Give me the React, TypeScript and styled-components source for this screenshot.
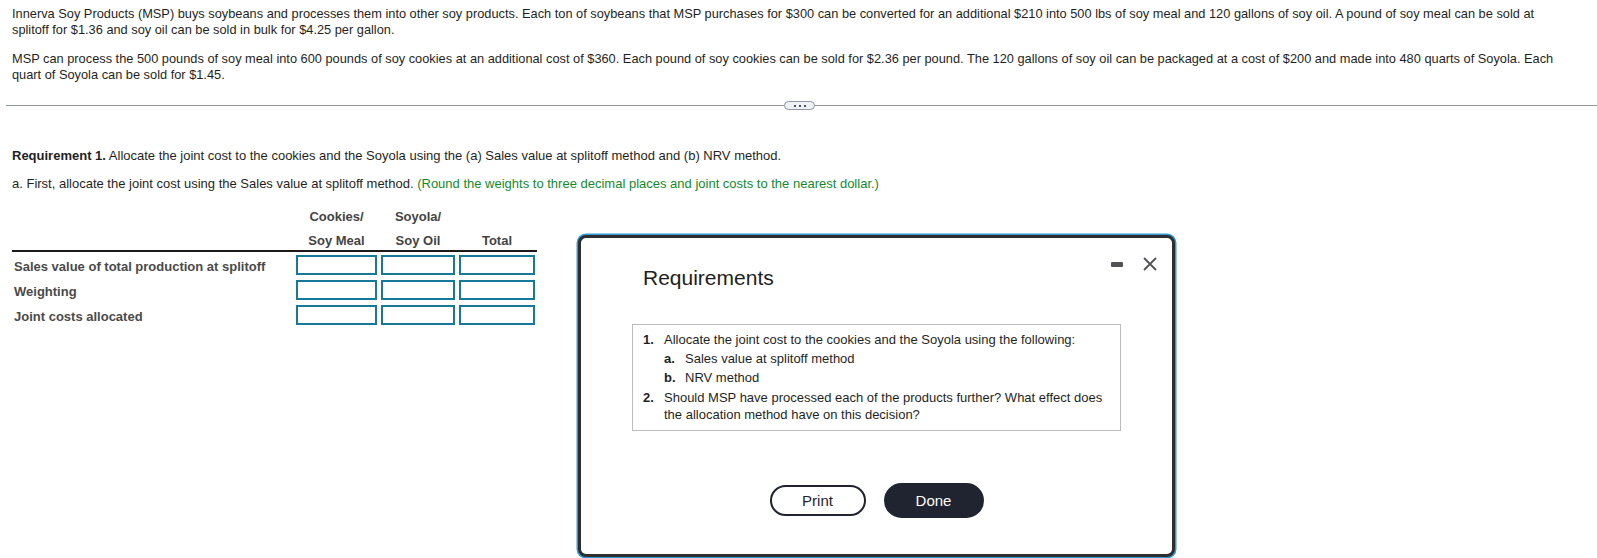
import styled, { createGlobalStyle } from 'styled-components'

const GlobalStyle = createGlobalStyle`
  html, body {
    margin: 0;
    padding: 0;
    background: #fff;
  }
  body {
    font-family: 'Liberation Sans', Arial, sans-serif;
    font-size: 13px;
    color: #1f1f1f;
  }
`

const Page = styled.div`
  position: relative;
  width: 1597px;
  height: 558px;
  overflow: hidden;
`

const Intro = styled.div`
  padding: 6px 32px 0 12px;
`

const Para = styled.p`
  margin: 0 0 13px;
  font-size: 12.8px;
  line-height: 16px;
`

const Divider = styled.div`
  margin: 22px 0 0 6px;
  height: 1px;
  background: #8d97a5;
  display: flex;
  justify-content: center;
  align-items: center;
`

const Pill = styled.div`
  width: 29px;
  height: 7px;
  margin-right: 4px;
  border: 1px solid #8d97a5;
  border-radius: 5px;
  background: #eef1f5;
  display: flex;
  align-items: center;
  justify-content: center;
  gap: 3px;
`

const Dot = styled.span`
  width: 2px;
  height: 2px;
  background: #4a5260;
`

const Question = styled.div`
  padding: 42px 12px 0;
`

const Line = styled.p<{ $gap?: number }>`
  margin: 0 0 ${p => p.$gap ?? 0}px;
  line-height: 16px;
`

const Hint = styled.span`
  color: #138a30;
`

const Table = styled.div`
  margin-top: 13px;
  width: 525px;
`

const Row = styled.div`
  display: grid;
  grid-template-columns: 280px 81px 74px 76px;
  column-gap: 4px;
  align-items: center;
`

const HeadRow = styled(Row)`
  border-bottom: 2px solid #1a1a1a;
  align-items: end;
`

const HeadCell = styled.div`
  text-align: center;
  font-weight: bold;
  color: #444;
  line-height: 24px;
  margin-bottom: -3px;
`

const Body = styled.div`
  display: flex;
  flex-direction: column;
  gap: 5px;
  padding-top: 3px;
`

const Label = styled.div`
  font-weight: bold;
  color: #4a4a4a;
  padding-left: 2px;
  padding-top: 2px;
`

const Cell = styled.div`
  height: 20px;
  box-sizing: border-box;
  border: 2px solid #16799a;
  background: #fff;
`

const Modal = styled.div`
  position: absolute;
  left: 578px;
  top: 235px;
  width: 597px;
  height: 322px;
  box-sizing: border-box;
  border: 3px solid #2e2e2e;
  border-radius: 8px;
  box-shadow: 0 0 0 1.5px #2f9bd8;
  background: #fff;
  padding: 19px 15px 0 51px;
  display: flex;
  flex-direction: column;
`

const ModalHead = styled.div`
  display: flex;
  justify-content: space-between;
  align-items: flex-start;
`

const Title = styled.h2`
  margin: 9px 0 0 11px;
  font-size: 21px;
  font-weight: normal;
  line-height: 23px;
  color: #1e1e1e;
`

const Controls = styled.div`
  display: flex;
  align-items: center;
  gap: 20px;
  height: 14px;
`

const Minimize = styled.span`
  width: 12px;
  height: 5px;
  border-radius: 1px;
  background: #505256;
  margin-top: 1px;
`

const ReqBox = styled.div`
  margin-top: 35px;
  width: 489px;
  box-sizing: border-box;
  border: 1px solid #bdbdbd;
  padding: 6px 14px 7px 10px;
`

const Item = styled.div<{ $gap: number; $sub?: boolean }>`
  display: flex;
  line-height: 17px;
  margin-top: ${p => p.$gap}px;
  padding-left: ${p => (p.$sub ? 21 : 0)}px;
`

const Num = styled.span`
  font-weight: bold;
  width: 21px;
  flex: none;
`

const Buttons = styled.div`
  display: flex;
  justify-content: center;
  align-items: center;
  gap: 18px;
  margin-top: 52px;
  padding-right: 36px;
`

const Button = styled.button<{ $primary?: boolean }>`
  font-family: 'Liberation Sans', Arial, sans-serif;
  font-size: 15px;
  box-sizing: border-box;
  width: ${p => (p.$primary ? 100 : 96)}px;
  height: ${p => (p.$primary ? 35 : 31)}px;
  border-radius: 18px;
  border: 2px solid #1f2430;
  background: ${p => (p.$primary ? '#1f2430' : '#fff')};
  color: ${p => (p.$primary ? '#fff' : '#1f2430')};
  cursor: pointer;
`

const rows = ['Sales value of total production at splitoff', 'Weighting', 'Joint costs allocated']

export default function App() {
  return (
    <Page>
      <GlobalStyle />
      <Intro>
        <Para>
          Innerva Soy Products (MSP) buys soybeans and processes them into other soy products. Each ton of soybeans that
          MSP purchases for $300 can be converted for an additional $210 into 500 lbs of soy meal and 120 gallons of soy
          oil. A pound of soy meal can be sold at splitoff for $1.36 and soy oil can be sold in bulk for $4.25 per gallon.
        </Para>
        <Para>
          MSP can process the 500 pounds of soy meal into 600 pounds of soy cookies at an additional cost of $360. Each
          pound of soy cookies can be sold for $2.36 per pound. The 120 gallons of soy oil can be packaged at a cost of
          $200 and made into 480 quarts of Soyola. Each quart of Soyola can be sold for $1.45.
        </Para>
      </Intro>
      <Divider>
        <Pill>
          <Dot />
          <Dot />
          <Dot />
        </Pill>
      </Divider>
      <Question>
        <Line $gap={12}>
          <b>Requirement 1.</b> Allocate the joint cost to the cookies and the Soyola using the (a) Sales value at
          splitoff method and (b) NRV method.
        </Line>
        <Line>
          a. First, allocate the joint cost using the Sales value at splitoff method.{' '}
          <Hint>(Round the weights to three decimal places and joint costs to the nearest dollar.)</Hint>
        </Line>
        <Table>
          <HeadRow>
            <div />
            <HeadCell>
              Cookies/
              <br />
              Soy Meal
            </HeadCell>
            <HeadCell>
              Soyola/
              <br />
              Soy Oil
            </HeadCell>
            <HeadCell>Total</HeadCell>
          </HeadRow>
          <Body>
            {rows.map(r => (
              <Row key={r}>
                <Label>{r}</Label>
                <Cell />
                <Cell />
                <Cell />
              </Row>
            ))}
          </Body>
        </Table>
      </Question>

      <Modal>
        <ModalHead>
          <Title>Requirements</Title>
          <Controls>
            <Minimize />
            <svg width="14" height="14" viewBox="0 0 14 14">
              <path d="M1 1 L13 13 M13 1 L1 13" stroke="#505256" strokeWidth="1.8" fill="none" />
            </svg>
          </Controls>
        </ModalHead>
        <ReqBox>
          <Item $gap={0}>
            <Num>1.</Num>
            <span>Allocate the joint cost to the cookies and the Soyola using the following:</span>
          </Item>
          <Item $gap={2} $sub>
            <Num>a.</Num>
            <span>Sales value at splitoff method</span>
          </Item>
          <Item $gap={2} $sub>
            <Num>b.</Num>
            <span>NRV method</span>
          </Item>
          <Item $gap={3}>
            <Num>2.</Num>
            <span>Should MSP have processed each of the products further? What effect does the allocation method have on this decision?</span>
          </Item>
        </ReqBox>
        <Buttons>
          <Button>Print</Button>
          <Button $primary>Done</Button>
        </Buttons>
      </Modal>
    </Page>
  )
}
